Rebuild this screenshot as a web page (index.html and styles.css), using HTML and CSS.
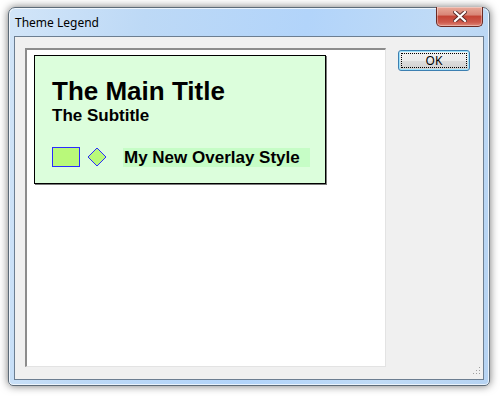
FILE: index.html
```html
<!DOCTYPE html>
<html>
  <head>
    <title>Theme Legend</title>
    <meta name="viewport" content="width=device-width, initial-scale=1.0">
    <link rel="stylesheet" href="styles.css">
  </head>
  <body>
    <div class="window">
      <div class="titlebar">
        <span class="title">Theme Legend</span>
        <button class="close" aria-label="Close">
          <svg width="14" height="11" viewBox="0 0 14 11">
            <path d="M2 1 L12 10 M12 1 L2 10" stroke="#5a2a28" stroke-width="4" stroke-linecap="square" fill="none"/>
            <path d="M2 1 L12 10 M12 1 L2 10" stroke="#fff" stroke-width="2.2" stroke-linecap="square" fill="none"/>
          </svg>
        </button>
      </div>
      <div class="client">
        <div class="panel">
          <div class="legend">
            <h1>The Main Title</h1>
            <h2>The Subtitle</h2>
            <div class="entry">
              <span class="swatch"></span>
              <svg class="diamond" width="20" height="20" viewBox="0 0 20 20">
                <path d="M10 1 L19 10 L10 19 L1 10 Z" fill="#b9f97a" stroke="#2b2bff" stroke-width="1"/>
              </svg>
              <span class="label">My New Overlay Style</span>
            </div>
          </div>
        </div>
        <div class="side">
          <button class="ok"><span>OK</span></button>
        </div>
        <svg class="grip" width="10" height="10" viewBox="0 0 10 10">
          <rect x="8" y="0" width="1" height="1" fill="#a0a0a0"/>
          <rect x="5" y="3" width="1" height="1" fill="#a0a0a0"/>
          <rect x="8" y="3" width="1" height="1" fill="#a0a0a0"/>
          <rect x="2" y="6" width="1" height="1" fill="#a0a0a0"/>
          <rect x="5" y="6" width="1" height="1" fill="#a0a0a0"/>
          <rect x="8" y="6" width="1" height="1" fill="#a0a0a0"/>
        </svg>
      </div>
    </div>
  </body>
</html>
```
FILE: styles.css
```css
* {
  margin: 0;
  padding: 0;
  box-sizing: border-box;
}
html,
body {
  width: 100%;
  height: 100%;
}
body {
  background: #fff;
  padding: 7px 0 0 8px;
  font-family: "Noto Sans", "Open Sans", sans-serif;
}
.window {
  display: flex;
  flex-direction: column;
  width: 482px;
  height: 379px;
  border: 1px solid #5d6b78;
  border-radius: 7px 7px 5px 5px;
  padding: 0 5px 5px 5px;
  background: linear-gradient(100deg, #d2e5f8 0%, #bdd9f6 25%, #b2d4fa 55%, #c0dbf6 80%, #b6d3f2 100%);
  box-shadow: 0 0 8px rgba(0, 0, 0, 0.55), inset 0 0 0 1px rgba(255, 255, 255, 0.7);
}
.titlebar {
  position: relative;
  height: 28px;
  display: flex;
  align-items: center;
  padding: 0 0 0 1px;
}
.title {
  font-size: 12px;
  color: #000;
  margin-top: 1px;
}
.close {
  position: absolute;
  top: -1px;
  right: 1px;
  width: 47px;
  height: 20px;
  border: 1px solid #6b2a24;
  border-top: none;
  border-radius: 0 0 5px 5px;
  background: linear-gradient(#e9a999 0%, #d98778 40%, #c44536 50%, #cd5a4c 80%, #e0897a 100%);
  box-shadow: inset 0 0 0 1px rgba(255, 255, 255, 0.35);
  display: flex;
  align-items: center;
  justify-content: center;
}
.client {
  position: relative;
  flex: 1;
  display: flex;
  gap: 12px;
  padding: 11px 13px 12px 10px;
  border: 1px solid #6c7e91;
  background: #f0f0f0;
}
.panel {
  flex: 1;
  background: #fff;
  border-left: 2px solid #8c8c8c;
  border-top: 2px solid #8c8c8c;
  border-right: 1px solid #e3e3e3;
  border-bottom: 1px solid #e3e3e3;
  padding: 5px 0 0 7px;
}
.legend {
  width: 292px;
  height: 129px;
  background: #dcfedc;
  border: 1px solid #000;
  box-shadow: 1px 1px 0 #7a7a7a;
  padding: 21px 0 0 17px;
  font-family: "Liberation Sans", Arial, sans-serif;
  color: #000;
}
.legend h1 {
  font-size: 26px;
  line-height: 29px;
  font-weight: bold;
}
.legend h2 {
  font-size: 17px;
  line-height: 19px;
  font-weight: bold;
}
.entry {
  display: flex;
  align-items: center;
  margin-top: 22px;
  height: 20px;
}
.swatch {
  width: 28px;
  height: 20px;
  background: #b9f97a;
  border: 1px solid #2b2bff;
}
.diamond {
  margin-left: 7px;
}
.label {
  margin-left: 16px;
  background: #c6fdc6;
  font-size: 17px;
  font-weight: bold;
  line-height: 19px;
  padding: 0 10px 0 1px;
}
.side {
  width: 72px;
}
.ok {
  width: 72px;
  height: 21px;
  margin-top: 1px;
  border: 1px solid #3c7fb1;
  border-radius: 3px;
  background: linear-gradient(#f2f2f2 0%, #ebebeb 50%, #dddddd 51%, #cfcfcf 100%);
  box-shadow: inset 0 0 0 1px #9fe2fb;
  font-family: "Noto Sans", "Open Sans", sans-serif;
  font-size: 12px;
  color: #000;
  padding: 2px;
}
.ok span {
  display: flex;
  align-items: center;
  justify-content: center;
  height: 100%;
  border: 1px dotted #000;
}
.grip {
  position: absolute;
  right: 2px;
  bottom: 2px;
}
```
